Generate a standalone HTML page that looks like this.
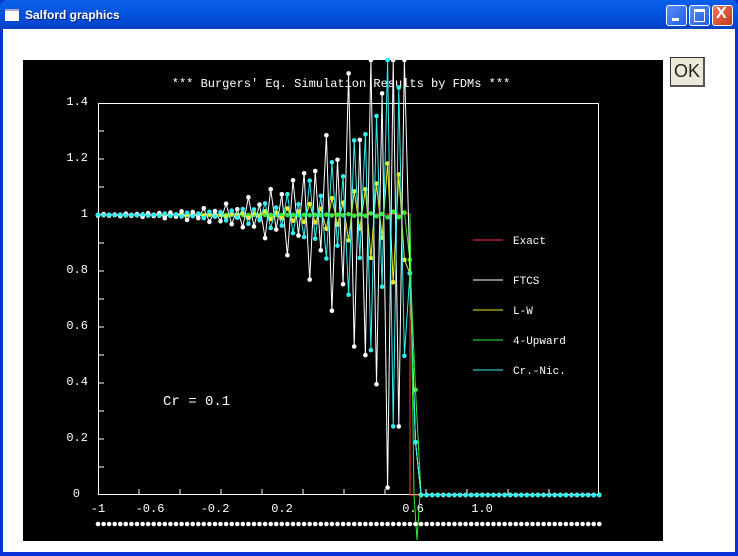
<!DOCTYPE html>
<html><head><style>
body{margin:0;width:738px;height:556px;overflow:hidden;background:#fff;font-family:"Liberation Sans",sans-serif}
.win{position:absolute;left:0;top:0;width:738px;height:556px;background:#0831d9;}
.tb{position:absolute;left:0;top:0;width:738px;height:30px;background:linear-gradient(#0a5fe8,#0355e0 40%,#0147d1 80%,#0a3fb8);border-radius:7px 7px 0 0}
.tt{position:absolute;left:25px;top:8px;color:#fff;font-weight:bold;font-size:12px;text-shadow:1px 1px #0a1f6e}
.ic{position:absolute;left:5px;top:9px;width:14px;height:10px;background:#fff;border-top:2px solid #aac}
.btn{position:absolute;top:5px;width:19px;height:19px;border:1px solid #fff;border-radius:3px;background:linear-gradient(135deg,#5a8df5,#1f5de8)}
.cl{position:absolute;left:3px;top:29px;width:732px;height:523px;background:#fff}
.ok{position:absolute;left:670px;top:57px;width:32px;height:27px;border:1px solid #333;border-right:2px solid #555;border-bottom:2px solid #555;background:#ece9d8;font:18px "Liberation Sans",sans-serif;color:#222;text-align:center;line-height:27px}
</style></head><body>
<div class="win"><div class="tb"><div class="ic"></div><div class="tt">Salford graphics</div>
<div class="btn" style="left:666px"><div style="position:absolute;left:5px;top:12px;width:7px;height:3px;background:#fff"></div></div>
<div class="btn" style="left:689px"><div style="position:absolute;left:4px;top:3px;width:9px;height:9px;border:1px solid #fff;border-top:3px solid #fff"></div></div>
<div class="btn" style="left:712px;background:linear-gradient(135deg,#e87a5a,#c8381a)"><div style="position:absolute;left:3px;top:-1px;color:#fff;font-weight:bold;font-size:16px">X</div></div>
</div>
<div class="cl"></div>
<div class="ok">OK</div>
<svg id="s" style="position:absolute;left:0;top:0" width="738" height="556">
<rect x="23" y="60" width="640" height="481" fill="#000"/>
<text x="341" y="87" fill="#fff" font-family="Liberation Mono" font-size="12" text-anchor="middle">*** Burgers' Eq. Simulation Results by FDMs ***</text>
<rect x="98.5" y="103.5" width="500" height="391" fill="none" stroke="#fff"/>
<g fill="#fff" font-family="Liberation Mono" font-size="12" text-anchor="end">
<text x="88" y="105">1.4</text><text x="88" y="161">1.2</text><text x="88" y="217">1</text><text x="88" y="273">0.8</text><text x="88" y="329">0.6</text><text x="88" y="385">0.4</text><text x="88" y="441">0.2</text><text x="80" y="497">0</text>
</g>
<g fill="#fff" font-family="Liberation Mono" font-size="12" text-anchor="middle">
<text x="98" y="512">-1</text><text x="150" y="512">-0.6</text><text x="215" y="512">-0.2</text><text x="282" y="512">0.2</text><text x="413" y="512">0.6</text><text x="482" y="512">1.0</text>
</g>
<text x="163" y="405" fill="#fff" font-family="Liberation Mono" font-size="14">Cr = 0.1</text>
<g font-family="Liberation Mono" font-size="11" fill="#fff">
<line x1="473" y1="240" x2="503" y2="240" stroke="#f33"/><text x="513" y="244">Exact</text>
<line x1="473" y1="280" x2="503" y2="280" stroke="#fff"/><text x="513" y="284">FTCS</text>
<line x1="473" y1="310" x2="503" y2="310" stroke="#ee2"/><text x="513" y="314">L-W</text>
<line x1="473" y1="340" x2="503" y2="340" stroke="#3e3"/><text x="513" y="344">4-Upward</text>
<line x1="473" y1="370" x2="503" y2="370" stroke="#3ee"/><text x="513" y="374">Cr.-Nic.</text>
</g>
<g id="g"></g>
</svg>
</div>
<script>
var g=document.getElementById('g'),h='';
var X=function(i){return 98+i*5.57},Y=function(v){return 495-v*280};
function clip(y){return Math.max(60,Math.min(541,y))}
for(var k=1;k<12;k++){var x=98+k*41;h+='<line x1="'+x+'" y1="495" x2="'+x+'" y2="489" stroke="#fff"/>';}
for(var k=1;k<14;k++){var y=495-k*28;h+='<line x1="98" y1="'+y+'" x2="104" y2="'+y+'" stroke="#fff"/>';}
var N=90;
function series(col,amp,len,dots,off){var pts=[],d='';for(var i=0;i<=N;i++){var x=X(i),v;
 if(x<408){var e=Math.exp((x-408)/len);v=1+amp*e*((i+off)%2?1:-1)*(0.7+0.3*Math.sin(i*1.7));}
 else if(x<420){v=amp>0.3?1-(x-408)/12*1.3:(1-(x-408)/12);} else v=0;
 pts.push(x.toFixed(1)+','+clip(Y(v)).toFixed(1));
 if(dots)d+='<circle cx="'+x.toFixed(1)+'" cy="'+clip(Y(v)).toFixed(1)+'" r="2.3" fill="'+col+'"/>';}
 h+='<polyline points="'+pts.join(' ')+'" fill="none" stroke="'+col+'"/>'+d;}
h+='<polyline points="98,214 410,214 410,495 599,495" fill="none" stroke="#f33"/>';
series('#3e3',0.02,30,true,0);
series('#ee2',0.35,45,true,1);
series('#fff',1.8,48,true,0);
series('#3ee',1.1,45,true,1);
h+='<polyline points="410,214 414,495 417,540 420,495" fill="none" stroke="#3e3"/>';
for(var i=0;i<=N;i++)h+='<circle cx="'+X(i).toFixed(1)+'" cy="524" r="2.3" fill="#fff"/>';
g.innerHTML=h;
</script>
</body></html>
